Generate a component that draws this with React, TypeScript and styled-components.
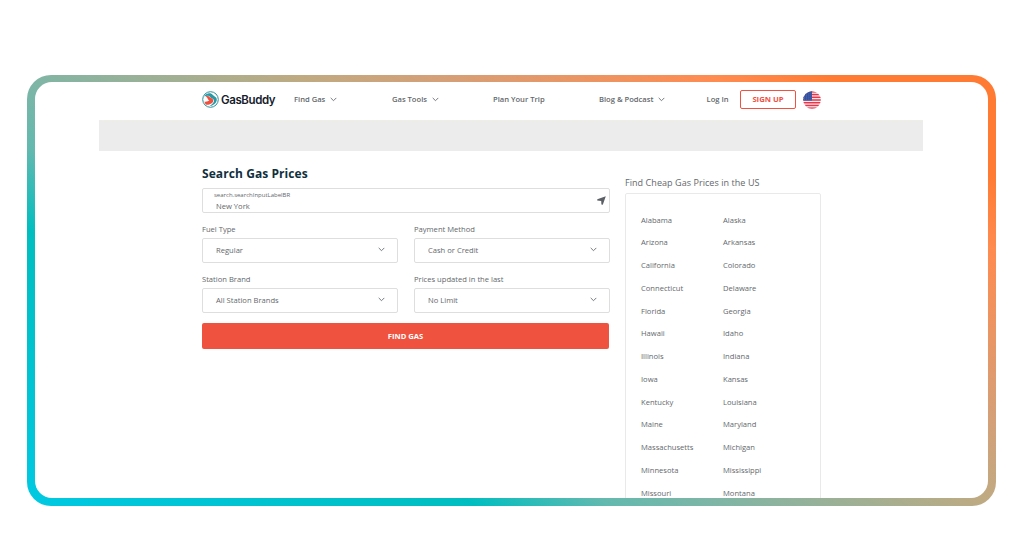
import React from "react";
import styled, { createGlobalStyle } from "styled-components";

const GlobalStyle = createGlobalStyle`
  * { box-sizing: border-box; }
  body {
    margin: 0;
    background: #fff;
    font-family: "Open Sans", "Noto Sans", sans-serif;
    color: #63686c;
  }
  h1, h2, ul { margin: 0; padding: 0; font: inherit; }
  button { font: inherit; padding: 0; cursor: pointer; }
`;

const Page = styled.div`
  width: 1024px;
  height: 536px;
  padding: 75px 28px 30px 27px;
  overflow: hidden;
`;

const Frame = styled.div`
  height: 431px;
  padding: 7px 8px 8px;
  border-radius: 24px;
  background: linear-gradient(
    31.6deg,
    #00c9e2 0%,
    #00bec0 27%,
    #63b9af 35%,
    #80b5a5 42%,
    #bfaa82 58%,
    #d4a078 66%,
    #ff8b50 83%,
    #ff7b33 90%
  );
`;

const Screen = styled.div`
  height: 416px;
  border-radius: 17px;
  background: #fff;
  overflow: hidden;
`;

const Header = styled.header`
  display: grid;
  grid-template-columns: 92px 98px 101px 106px 107.5px 33.5px 63px 18px;
  align-items: center;
  height: 38px;
  padding: 0 0 3px 167px;
`;

const Logo = styled.div`
  display: flex;
  align-items: center;
  gap: 2px;
`;

const LogoText = styled.span`
  font: 600 11.5px/16px Inter, sans-serif;
  letter-spacing: -0.4px;
  color: #14202b;
`;

const NavItem = styled.a`
  display: flex;
  align-items: center;
  gap: 5px;
  padding-bottom: 1px;
  font-size: 7.6px;
  font-weight: 600;
  line-height: 12px;
  white-space: nowrap;
`;

const SignUp = styled.button`
  width: 56px;
  height: 19px;
  padding-bottom: 2px;
  border: 1px solid #f0523f;
  border-radius: 2px;
  background: #fff;
  color: #f0523f;
  font-size: 7.7px;
  font-weight: 700;
`;

const Banner = styled.div`
  width: 824px;
  height: 31px;
  margin-left: 64px;
  background: #ececec;
  border-top: 1px solid #eeeee4;
`;

const Content = styled.main`
  display: grid;
  grid-template-columns: 408px 196px;
  column-gap: 15px;
  padding-left: 167px;
`;

const SearchPanel = styled.section`
  padding-top: 14px;
`;

const Title = styled.h1`
  font-size: 12px;
  font-weight: 700;
  letter-spacing: 0.08px;
  line-height: 17px;
  color: #10303e;
`;

const SearchBox = styled.div`
  display: flex;
  justify-content: space-between;
  align-items: center;
  height: 25px;
  margin-top: 6px;
  padding: 0 3px 0 11px;
  border: 1px solid #dedede;
  border-radius: 2px;
`;

const SearchLabel = styled.div`
  font-size: 6px;
  line-height: 9px;
  padding-top: 1px;
`;

const SearchValue = styled.div`
  padding-left: 2px;
  font-size: 7.6px;
  line-height: 12px;
`;

const Fields = styled.div`
  display: grid;
  grid-template-columns: 196px 196px;
  column-gap: 16px;
`;

const Field = styled.div`
  height: 50px;
  padding-top: 10px;
`;

const FieldLabel = styled.div`
  height: 15px;
  font-size: 7.6px;
  line-height: 12px;
`;

const Select = styled.div`
  display: flex;
  justify-content: space-between;
  align-items: center;
  height: 25px;
  padding: 0 12px 2px 13px;
  border: 1px solid #dedede;
  border-radius: 2px;
  font-size: 7.6px;
`;

const FindButton = styled.button`
  display: block;
  width: 407px;
  height: 26px;
  margin-top: 10px;
  border: 0;
  border-radius: 2px;
  background: #ef533f;
  color: #fff;
  font-size: 7.6px;
  font-weight: 700;
`;

const StatesPanel = styled.aside`
  padding-top: 25px;
`;

const StatesTitle = styled.h2`
  height: 16.5px;
  font-size: 9px;
  letter-spacing: 0.06px;
  line-height: 13px;
  white-space: nowrap;
`;

const StatesBox = styled.ul`
  display: grid;
  grid-template-columns: 82px 82px;
  grid-auto-rows: 22.75px;
  height: 330px;
  padding: 15px 0 0 15px;
  border: 1px solid #e9e9e9;
  border-radius: 2px;
  list-style: none;
`;

const State = styled.li`
  font-size: 7.6px;
  line-height: 22px;
`;

const Chevron = () => (
  <svg width="7" height="5" viewBox="0 0 7 5" fill="none" stroke="#666c70" strokeWidth="0.9">
    <path d="M0.7 0.9 3.5 3.7 6.3 0.9" />
  </svg>
);

const LogoMark = () => (
  <svg width="17" height="17" viewBox="0 0 17 17">
    <circle cx="8.5" cy="8.5" r="7.8" fill="#fff" stroke="#2a8f9c" strokeWidth="1" />
    <path d="M2.2 5.6C3.8 2.6 7 1.7 9.4 2.7 10.6 3.3 11 4.3 12.4 5.2 15.2 6.8 15.4 9.2 13.9 11.4 12.6 13.3 10.6 14.6 7.6 15.1 10.6 13 12.6 11.2 11.9 9.1 11.2 7.2 8.2 7.2 7.6 5.6 7.2 4.3 4.4 4.3 2.2 5.6Z" fill="#2a97a4" />
    <path d="M3.6 5.2C5.6 4.6 7 5 7.6 6 8.4 7.2 11.3 7.3 11.3 9.4 11.2 12 7.6 14 4.3 13.7 3.3 12.9 2.7 11.9 2.4 10.7 4.4 11 6.6 10.4 7.4 9.3 5.4 8.7 6.3 6.9 3.6 5.2Z" fill="#ef503e" />
  </svg>
);

const Flag = () => (
  <svg width="18" height="18" viewBox="0 0 18 18">
    <defs>
      <clipPath id="flag-circle"><circle cx="9" cy="9" r="8.8" /></clipPath>
    </defs>
    <g clipPath="url(#flag-circle)">
      <rect width="18" height="18" fill="#f4f1f5" />
      {[0, 1, 2, 3, 4, 5, 6].map((i) => (
        <rect key={i} y={0.1 + i * 2.72} width="18" height="1.5" fill="#ee3345" />
      ))}
      <rect width="9" height="9.5" fill="#34519f" />
      {[2, 4, 6, 8].map((y) =>
        [1.5, 3.7, 5.9, 8].map((x) => <circle key={`${x}-${y}`} cx={x} cy={y} r="0.35" fill="#b9c4e4" />)
      )}
    </g>
  </svg>
);

const LocationArrow = () => (
  <svg width="9" height="9" viewBox="0 0 9 9">
    <path d="M8.8 0.2 5.8 8.8 4.4 8.6 4.2 5 0.2 4.4 0.3 3.2Z" fill="#5a6065" />
  </svg>
);

const fields = [
  ["Fuel Type", "Regular"],
  ["Payment Method", "Cash or Credit"],
  ["Station Brand", "All Station Brands"],
  ["Prices updated in the last", "No Limit"],
];

const states = [
  "Alabama", "Alaska", "Arizona", "Arkansas", "California", "Colorado",
  "Connecticut", "Delaware", "Florida", "Georgia", "Hawaii", "Idaho",
  "Illinois", "Indiana", "Iowa", "Kansas", "Kentucky", "Louisiana",
  "Maine", "Maryland", "Massachusetts", "Michigan", "Minnesota", "Mississippi",
  "Missouri", "Montana",
];

export default function App() {
  return (
    <Page>
      <GlobalStyle />
      <Frame>
        <Screen>
          <Header>
            <Logo>
              <LogoMark />
              <LogoText>GasBuddy</LogoText>
            </Logo>
            <NavItem>Find Gas <Chevron /></NavItem>
            <NavItem>Gas Tools <Chevron /></NavItem>
            <NavItem>Plan Your Trip</NavItem>
            <NavItem>Blog &amp; Podcast <Chevron /></NavItem>
            <NavItem>Log In</NavItem>
            <SignUp>SIGN UP</SignUp>
            <Flag />
          </Header>
          <Banner />
          <Content>
            <SearchPanel>
              <Title>Search Gas Prices</Title>
              <SearchBox>
                <div>
                  <SearchLabel>search.searchInputLabelBR</SearchLabel>
                  <SearchValue>New York</SearchValue>
                </div>
                <LocationArrow />
              </SearchBox>
              <Fields>
                {fields.map(([label, value]) => (
                  <Field key={label}>
                    <FieldLabel>{label}</FieldLabel>
                    <Select>{value}<Chevron /></Select>
                  </Field>
                ))}
              </Fields>
              <FindButton>FIND GAS</FindButton>
            </SearchPanel>
            <StatesPanel>
              <StatesTitle>Find Cheap Gas Prices in the US</StatesTitle>
              <StatesBox>
                {states.map((name) => <State key={name}>{name}</State>)}
              </StatesBox>
            </StatesPanel>
          </Content>
        </Screen>
      </Frame>
    </Page>
  );
}
